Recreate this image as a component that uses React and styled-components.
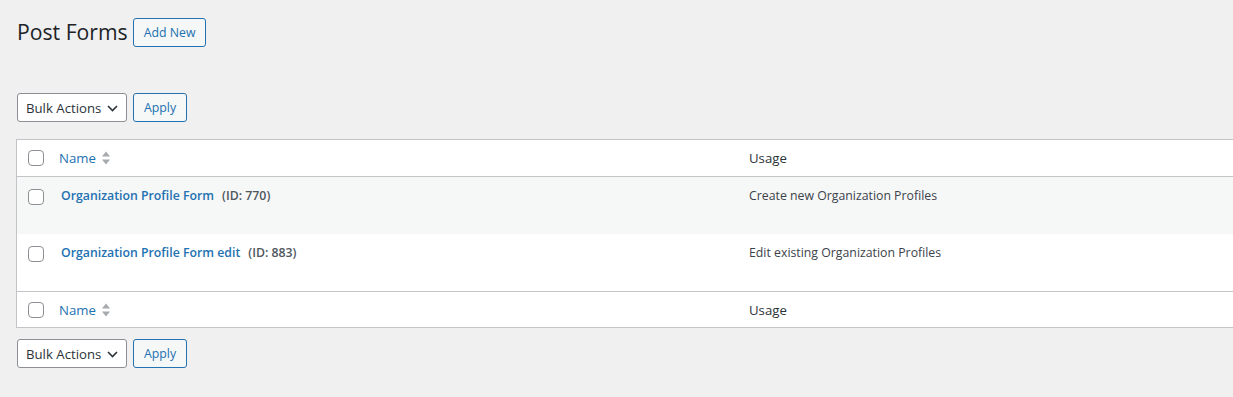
import React from 'react';
import styled, { createGlobalStyle } from 'styled-components';

const GlobalStyle = createGlobalStyle`
  html, body {
    margin: 0;
    padding: 0;
    background: #f0f0f1;
    overflow: hidden;
  }
  body {
    font-family: 'Open Sans', 'Noto Sans', sans-serif;
    font-size: 12.3px;
    color: #3c434a;
  }
`;

const Wrap = styled.div`
  padding: 0 0 0 17px;
  width: 1500px;
`;

const TitleBar = styled.div`
  display: flex;
  align-items: center;
  gap: 5px;
  padding-top: 17px;
  height: 30px;
`;

const Heading = styled.h1`
  margin: 0;
  font-size: 21.2px;
  font-weight: 400;
  color: #1d2327;
  line-height: 30px;
`;

const Button = styled.button`
  font-family: inherit;
  font-size: 12.3px;
  height: 29px;
  padding: 2px 10px 0;
  color: #2271b1;
  background: #f6f7f7;
  border: 1px solid #2271b1;
  border-radius: 3px;
  line-height: 1;
  cursor: pointer;
`;

const Actions = styled.div`
  display: flex;
  align-items: center;
  gap: 6px;
  margin: ${p => p.$m};
`;

const Select = styled.div`
  display: flex;
  align-items: center;
  justify-content: space-between;
  box-sizing: border-box;
  width: 110px;
  height: 29px;
  padding: 1px 8px 0;
  border: 1px solid #8c8f94;
  border-radius: 3px;
  background: #fff;
  color: #2c3338;
  font-size: 13.2px;
`;

const Table = styled.div`
  margin-left: -1px;
  border: 1px solid #c3c4c7;
  border-right: 0;
  background: #fff;
`;

const Row = styled.div`
  display: grid;
  box-sizing: border-box;
  grid-template-columns: 32px 690px 1fr;
  height: ${p => p.$h}px;
  background: ${p => (p.$alt ? '#f6f7f7' : '#fff')};
  border-bottom: ${p => (p.$line ? '1px solid #c3c4c7' : '0')};
`;

const Cell = styled.div`
  display: flex;
  align-items: ${p => (p.$top ? 'flex-start' : 'center')};
  padding: ${p => (p.$top ? '10px 10px 0' : '0 10px')};
  font-size: ${p => (p.$head ? 13.2 : 12.3)}px;
  color: ${p => (p.$head ? '#2c3338' : '#3c434a')};
`;

const CheckCell = styled.div`
  display: flex;
  align-items: ${p => (p.$top ? 'flex-start' : 'center')};
  padding: ${p => (p.$top ? '12px 0 0 11px' : '0 0 0 11px')};
`;

const Check = styled.span`
  display: block;
  box-sizing: border-box;
  width: 16px;
  height: 16px;
  border: 1px solid #8c8f94;
  border-radius: 4px;
  background: #fff;
`;

const SortLink = styled.a`
  display: flex;
  align-items: center;
  gap: 5px;
  color: #2271b1;
  text-decoration: none;
`;

const RowTitle = styled.a`
  margin-left: 2px;
  font-weight: 600;
  color: #2271b1;
  text-decoration: none;
`;

const PostId = styled.span`
  margin-left: 8px;
  font-weight: 600;
  color: #50575e;
`;

const SortIcon = () => (
  <svg width="10" height="16" viewBox="0 0 10 16">
    <path d="M1 6.5 L5 1.5 L9 6.5 Z" fill="#a7aaad" />
    <path d="M1 9.5 L5 14.5 L9 9.5 Z" fill="#a7aaad" />
  </svg>
);

const Chevron = () => (
  <svg width="11" height="7" viewBox="0 0 11 7">
    <path d="M1 1 L5.5 5.5 L10 1" fill="none" stroke="#2c3338" strokeWidth="1.6" />
  </svg>
);

const BulkActions = ({ m }) => (
  <Actions $m={m}>
    <Select>
      <span>Bulk Actions</span>
      <Chevron />
    </Select>
    <Button>Apply</Button>
  </Actions>
);

const forms = [
  { title: 'Organization Profile Form', id: 770, usage: 'Create new Organization Profiles' },
  { title: 'Organization Profile Form edit', id: 883, usage: 'Edit existing Organization Profiles' },
];

const HeaderRow = ({ line }) => (
  <Row $h={line ? 37 : 35} $line={line}>
    <CheckCell>
      <Check />
    </CheckCell>
    <Cell $head>
      <SortLink href="#">
        Name <SortIcon />
      </SortLink>
    </Cell>
    <Cell $head>Usage</Cell>
  </Row>
);

export default function App() {
  return (
    <>
      <GlobalStyle />
      <Wrap>
        <TitleBar>
          <Heading>Post Forms</Heading>
          <Button>Add New</Button>
        </TitleBar>
        <BulkActions m="46px 0 17px" />
        <Table>
          <HeaderRow line />
          {forms.map((f, idx) => (
            <Row key={f.id} $h={idx === forms.length - 1 ? 58 : 57} $alt={idx % 2 === 0} $line={idx === forms.length - 1}>
              <CheckCell $top>
                <Check />
              </CheckCell>
              <Cell $top>
                <RowTitle href="#">{f.title}</RowTitle>
                <PostId>(ID: {f.id})</PostId>
              </Cell>
              <Cell $top>{f.usage}</Cell>
            </Row>
          ))}
          <HeaderRow />
        </Table>
        <BulkActions m="11px 0 0" />
      </Wrap>
    </>
  );
}
